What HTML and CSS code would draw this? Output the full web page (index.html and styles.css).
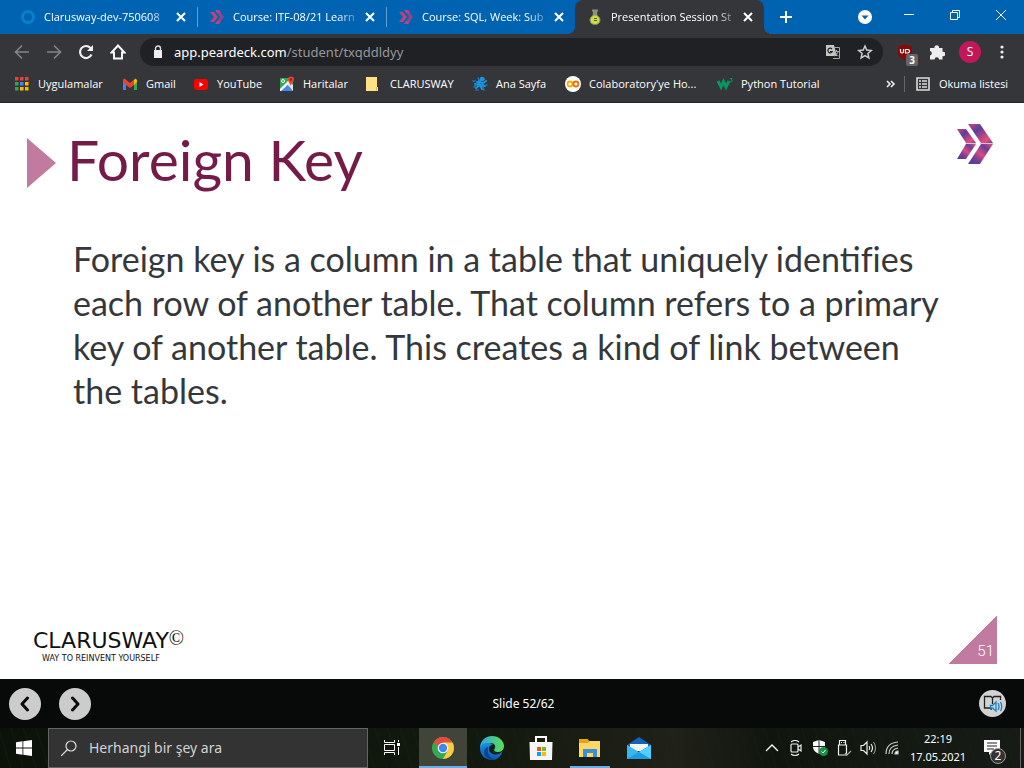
FILE: index.html
```html
<!DOCTYPE html>
<html lang="tr">
<head>
<meta charset="utf-8">
<title>Presentation Session Student</title>
<link rel="stylesheet" href="styles.css">
</head>
<body>
<svg class="defs" aria-hidden="true">
  <defs>
    <linearGradient id="wing" x1="0" y1="0" x2="1" y2="1"><stop offset="0" stop-color="#c9457f"/><stop offset=".35" stop-color="#5b3f98"/><stop offset=".6" stop-color="#b04489"/><stop offset=".8" stop-color="#e84c7c"/><stop offset="1" stop-color="#6a3f95"/></linearGradient>
    <linearGradient id="wing2" x1="0" y1="1" x2="1" y2="0"><stop offset="0" stop-color="#4c3a95"/><stop offset=".3" stop-color="#7a3f95"/><stop offset=".5" stop-color="#d84a85"/><stop offset=".75" stop-color="#673f98"/><stop offset="1" stop-color="#ee4c7d"/></linearGradient>
    <linearGradient id="edgeA" x1="0" y1="0" x2="1" y2="0"><stop offset="0" stop-color="#2aa5e8"/><stop offset="1" stop-color="#5ee04c"/></linearGradient>
    <linearGradient id="edgeB" x1="0" y1="0" x2="0" y2="1"><stop offset="0" stop-color="#1a8fe0"/><stop offset="1" stop-color="#0b58b0"/></linearGradient>
    <symbol id="x" viewBox="0 0 10 10"><path d="M1 1l8 8M9 1l-8 8" fill="none" stroke="#fff" stroke-width="2"/></symbol>
    <symbol id="fav" viewBox="0 0 16 16"><path d="M6 1h4l5 7-5 7H6l5-7z" fill="#8b4592"/><path d="M6 1h4l2 3H8zM8 12h4l-2 3H6z" fill="#b8457f"/><path d="M1 3h4l4 5-4 5H1l4-5z" fill="#b8457f"/></symbol>
  </defs>
</svg>

<header class="browser">
  <div class="tabstrip">
    <div class="tab">
      <svg class="i16" viewBox="0 0 16 16"><circle cx="8" cy="8" r="5.500" fill="none" stroke="#0582c9" stroke-width="3"/></svg>
      <span class="tab-title">Clarusway-dev-750608</span>
      <button class="close" aria-label="Kapat"><svg class="i10"><use href="#x"/></svg></button>
    </div>
    <div class="tab">
      <svg class="i16"><use href="#fav"/></svg>
      <span class="tab-title">Course: ITF-08/21 Learn</span>
      <button class="close" aria-label="Kapat"><svg class="i10"><use href="#x"/></svg></button>
    </div>
    <div class="tab">
      <svg class="i16"><use href="#fav"/></svg>
      <span class="tab-title">Course: SQL, Week: Sub</span>
      <button class="close" aria-label="Kapat"><svg class="i10"><use href="#x"/></svg></button>
    </div>
    <div class="tab active">
      <svg class="i16" viewBox="0 0 16 16"><path d="M6.500 2.500h3l.5 4c2 1.200 3 2.500 3 4.500 0 3-2 4.500-5 4.500S3 14 3 11c0-2 1-3.300 3-4.500z" fill="#cddc4b" stroke="#858b55"/><path d="M5 .5h6v2h-1v4H6v-4H5z" fill="#8c8f85"/><path d="M7 9.500h3M7 11.500h3" stroke="#51601c"/></svg>
      <span class="tab-title">Presentation Session St</span>
      <button class="close" aria-label="Kapat"><svg class="i10"><use href="#x"/></svg></button>
    </div>
    <button class="newtab" aria-label="Yeni sekme"><svg width="12" height="12" viewBox="0 0 12 12"><path d="M6 0v12M0 6h12" stroke="#fff" stroke-width="2"/></svg></button>
    <div class="window-controls">
      <button aria-label="Sekme ara"><svg width="14" height="14" viewBox="0 0 14 14"><circle cx="7" cy="7" r="7" fill="#fff"/><path d="M3.500 5.500h7L7 9.500z" fill="#0063b1"/></svg></button>
      <button aria-label="Küçült"><svg width="12" height="12" viewBox="0 0 12 12"><path d="M1 5.500h10" stroke="#fff"/></svg></button>
      <button aria-label="Geri yükle"><svg width="12" height="12" viewBox="0 0 12 12" fill="none" stroke="#fff"><path d="M1.500 3.500h7v7h-7zM3.500 3V1.500h7v7H9"/></svg></button>
      <button aria-label="Pencereyi kapat"><svg width="12" height="12" viewBox="0 0 12 12"><path d="M1 1l10 10M11 1L1 11" stroke="#fff"/></svg></button>
    </div>
  </div>

  <div class="toolbar">
    <div class="nav">
      <button aria-label="Geri"><svg class="i16" viewBox="0 0 16 16"><path d="M15 8H2M8 1.500L1.500 8 8 14.500" fill="none" stroke="#838487" stroke-width="1.600"/></svg></button>
      <button aria-label="İleri"><svg class="i16" viewBox="0 0 16 16"><path d="M1 8h13M8 1.500L14.500 8 8 14.500" fill="none" stroke="#838487" stroke-width="1.600"/></svg></button>
      <button aria-label="Yenile"><svg class="i16" viewBox="0 0 16 16"><path d="M13.500 10.500a6 6 0 1 1-1-6.500" fill="none" stroke="#f1f1f1" stroke-width="2.200"/><path d="M15 1v6H9z" fill="#f1f1f1"/></svg></button>
      <button aria-label="Ana sayfa"><svg class="i16" viewBox="0 0 16 16"><path d="M8 1.500L1.500 8.500H4v6h8v-6h2.500z" fill="none" stroke="#fff" stroke-width="1.900"/></svg></button>
    </div>
    <div class="omnibox">
      <svg width="10" height="14" viewBox="0 0 10 14"><path d="M1 5h8v8H1z" fill="#eee"/><path d="M2.500 6V3.500a2.500 2.500 0 0 1 5 0V6" fill="none" stroke="#ddd" stroke-width="1.400"/></svg>
      <span class="url">app.peardeck.com<span>/student/txqddldyy</span></span>
      <button aria-label="Çevir"><svg class="i16" viewBox="0 0 16 16"><path d="M1 1h8l3 11H1z" fill="#c6c6c6"/><path d="M9.500 3.500h5v11H8" fill="none" stroke="#a7a7a7"/><path d="M7 5a2.300 2.300 0 1 0 .3 2.500H5" fill="none" stroke="#222" stroke-width="1.200"/><path d="M9 7.500h5M11.500 6v1.500M13 7.500c-.5 2-2 3.500-4 4.500M10 8c1 2 2 3 3.500 4" fill="none" stroke="#a7a7a7"/></svg></button>
      <button aria-label="Yer işareti"><svg class="i16" viewBox="0 0 16 16"><path d="M8 2l1.800 4.100 4.500.4-3.400 3 1 4.400L8 11.600l-3.900 2.300 1-4.400-3.400-3 4.500-.4z" fill="none" stroke="#ccc" stroke-width="1.500"/></svg></button>
    </div>
    <div class="extensions">
      <button class="ublock" aria-label="uBlock"><svg class="i16" viewBox="0 0 16 16"><path d="M8 0c2 1.500 4 2 7 2v6c0 4-3 6.500-7 8-4-1.500-7-4-7-8V2c3 0 5-.500 7-2z" fill="#8b0808"/><path d="M3.500 5v2.500q0 1.500 1.500 1.500t1.500-1.500V5M8.500 9V5.500h2q2 0 2 1.700T10.500 9z" fill="none" stroke="#fff" stroke-width="1.200"/></svg><span class="count">3</span></button>
      <button aria-label="Uzantılar"><svg class="i16" viewBox="0 0 16 16"><path d="M1 4h4.500a2.300 2.300 0 1 1 4.500 0h3.500v4a2.200 2.200 0 1 1 0 4v3.500H10a2.200 2.200 0 0 0-4.400 0H1v-4a2.300 2.300 0 0 0 0-4.500z" fill="#eee"/></svg></button>
      <button class="avatar">S</button>
      <button class="more" aria-label="Menü"><svg width="4" height="16" viewBox="0 0 4 16" fill="#eee"><circle cx="2" cy="3" r="1.600"/><circle cx="2" cy="8" r="1.600"/><circle cx="2" cy="13" r="1.600"/></svg></button>
    </div>
  </div>

  <nav class="bookmarks">
    <a href="#"><svg class="i16" viewBox="0 0 16 16"><path d="M1 1h3.500v3.500H1zM6 1h3.500v3.500H6zM11 1h3.500v3.500H11z" fill="#e94235"/><path d="M1 6h3.500v3.500H1zM1 11h3.500v3.500H1z" fill="#34a354"/><path d="M6 6h3.500v3.500H6z" fill="#4285f4"/><path d="M11 6h3.500v3.500H11zM6 11h3.500v3.500H6zM11 11h3.500v3.500H11z" fill="#fbbc05"/></svg>Uygulamalar</a>
    <a href="#"><svg class="i16" viewBox="0 0 16 16"><path d="M1 4v10h3V7" fill="#4285f4"/><path d="M12 7v7h3V4" fill="#34a853"/><path d="M12 4l1.500-1.500L15 4v2l-3 3z" fill="#fbbc04"/><path d="M1 3.500L2.500 2.500 8 7l4-3.500V9l-4 3-4-3-3-3z" fill="#ea4335"/></svg>Gmail</a>
    <a href="#"><svg class="i16" viewBox="0 0 16 16"><rect x="1" y="3" width="14" height="11" rx="3" fill="#f00"/><path d="M6.500 6v5l4-2.500z" fill="#fff"/></svg>YouTube</a>
    <a href="#"><svg class="i16" viewBox="0 0 16 16"><path d="M1 2h13v13H1z" fill="#34a853"/><path d="M1 15l6.500-7 6.500 7z" fill="#4285f4"/><path d="M1 13L12 2h2v2L2 15H1z" fill="#fff"/><path d="M8 8l6 7V9L10 6z" fill="#e6e6e6"/><circle cx="4" cy="5" r="1.500" fill="none" stroke="#fff"/><path d="M11.500 10C11 7 9 6 9 3.500a3 3 0 0 1 6 0C15 6 12 7 11.500 10z" fill="#ea4335"/><circle cx="12" cy="3.500" r="1.200" fill="#8b1c13"/></svg>Haritalar</a>
    <a href="#"><svg class="i16" viewBox="0 0 16 16"><path d="M0 1h11v10h1v4H0z" fill="#ffe082"/><path d="M10.500 11v3.500" stroke="#d9b64e"/></svg>CLARUSWAY</a>
    <a href="#"><svg class="i16" viewBox="0 0 16 16" fill="none" stroke="#1a95e0" stroke-width="2" stroke-linecap="round"><path d="M7 5l5-2M5 6l6 1 3-2M8 5q-3 3 0 4t3-2M3 8l5 1 5 1M4 12l4-3 2 4" /><circle cx="10" cy="3" r="1.200"/><path d="M1 5h2M2 11l2-2M12 14l-1-3M4 14h2M14 9h1M6 2l1 2" stroke="#1479c0" stroke-width="1.600"/></svg>Ana Sayfa</a>
    <a href="#"><svg class="i16" viewBox="0 0 16 16"><circle cx="8" cy="8" r="8" fill="#fff"/><circle cx="5" cy="8" r="2.500" fill="none" stroke="#f9ab00" stroke-width="1.800"/><circle cx="11" cy="8" r="2.500" fill="none" stroke="#e8710a" stroke-width="1.800"/></svg>Colaboratory'ye Ho...</a>
    <a href="#"><svg class="i16" viewBox="0 0 16 16"><path d="M1 5l3 6 2.500-5.500L9 11l3-6" fill="none" stroke="#059862" stroke-width="3"/><path d="M13 2.500h2l-1 1.500q1.500 0 1 1.500t-2 0" fill="none" stroke="#059862"/></svg>Python Tutorial</a>
    <button class="overflow" aria-label="Diğer yer işaretleri"><svg width="10" height="8" viewBox="0 0 10 8"><path d="M1 1l3 3-3 3M5 1l3 3-3 3" fill="none" stroke="#eee" stroke-width="1.600"/></svg></button>
    <a href="#" class="reading"><svg class="i16" viewBox="0 0 16 16"><path d="M2 2h12v12H2z" fill="none" stroke="#ddd" stroke-width="1.600"/><path d="M4 5h2M7 5h5M4 8h2M7 8h5M4 11h2M7 11h5" stroke="#ddd" stroke-width="1.500"/></svg>Okuma listesi</a>
  </nav>
</header>

<main class="slide">
  <div class="slide-head">
    <svg width="29" height="50" viewBox="0 0 29 50"><path d="M0 0l29 25L0 50z" fill="#c27ba0"/></svg>
    <h1>Foreign Key</h1>
    <svg class="logo" width="38" height="42" viewBox="0 0 38 42"><path d="M1 6h9l10 14H10z" fill="url(#wing)"/><path d="M10 21h10L10 36H1z" fill="url(#wing2)"/><path d="M12 1h12l13 19H25z" fill="url(#wing)"/><path d="M25 21h12L24 41H12z" fill="url(#wing2)"/><path d="M10 20.500h10M24 20.500h13" stroke="#d9c4dc"/></svg>
  </div>
  <p>Foreign key is a column in a table that uniquely identifies<br>each row of another table. That column refers to a primary<br>key of another table. This creates a kind of link between<br>the tables.</p>
  <div class="slide-foot">
    <div class="brand">
      <div class="brand-name">CLARUSWAY<span>©</span></div>
      <div class="brand-tag">WAY TO REINVENT YOURSELF</div>
    </div>
    <div class="page-number">51</div>
  </div>
</main>

<div class="player">
  <div class="player-nav">
    <button class="round" aria-label="Önceki"><svg class="i16" viewBox="0 0 16 16"><path d="M10.500 2L5 8l5.500 6" fill="none" stroke="#080a0a" stroke-width="3" stroke-linecap="round" stroke-linejoin="round"/></svg></button>
    <button class="round" aria-label="Sonraki"><svg class="i16" viewBox="0 0 16 16"><path d="M5.500 2L11 8l-5.500 6" fill="none" stroke="#080a0a" stroke-width="3" stroke-linecap="round" stroke-linejoin="round"/></svg></button>
  </div>
  <div class="player-status">Slide 52/62</div>
  <button class="reader" aria-label="Tam ekran okuyucu"><svg width="20" height="18" viewBox="0 0 20 18" fill="none"><path d="M9 14H8l-1-1H1.500V1.500H8L9.500 3 11 1.500h6.500V5M9.500 3v6" stroke="#222" stroke-width="1.300"/><path d="M7.500 10.500h2L13 7v9l-3.500-3h-2z" stroke="#1782c5" stroke-width="1.300"/><path d="M15 8q2 3.500 0 7M17.500 7q2.500 4.500 0 9" stroke="#1782c5" stroke-width="1.300"/></svg></button>
</div>

<footer class="taskbar">
  <button class="start" aria-label="Başlat"><svg class="i16" viewBox="0 0 16 16" fill="#fff"><path d="M0 2.200l6.500-.9v6.300H0zM7.300 1.200L16 0v7.600H7.300zM0 8.400h6.500v6.300L0 13.800zM7.300 8.400H16V16l-8.700-1.200z"/></svg></button>
  <label class="search">
    <svg class="i16" viewBox="0 0 16 16"><circle cx="10" cy="6" r="5" fill="none" stroke="#ddd" stroke-width="1.200"/><path d="M6.500 9.500L0 16" stroke="#ddd" stroke-width="1.200"/></svg>
    <input type="text" placeholder="Herhangi bir şey ara" aria-label="Herhangi bir şey ara">
  </label>
  <div class="apps">
    <button aria-label="Görev görünümü"><svg width="18" height="18" viewBox="0 0 18 18" fill="none" stroke="#fff"><path d="M1.500 1v2.500h10V1M1.500 16v-2.500h10V16M1.500 5.500h10v6h-10zM15.500 1v2M15.500 8v8"/><path d="M14 4h3v3h-3z" fill="#fff" stroke="none"/></svg></button>
    <button class="current" aria-label="Chrome"><svg class="i24" viewBox="0 0 24 24"><circle cx="12" cy="12" r="11" fill="#34a853"/><path d="M12 12L2.500 6.500A11 11 0 0 1 21.500 6.500H12z" fill="#e84a3c"/><path d="M12 6.500h9.500A11 11 0 0 1 12 23l5-9z" fill="#fbcb43"/><circle cx="12" cy="12" r="5.300" fill="#fff"/><circle cx="12" cy="12" r="4.200" fill="#4285f4"/></svg></button>
    <button aria-label="Edge"><svg class="i24" viewBox="0 0 24 24"><path d="M0 12C0 5 5 0 12 0s12 5 12 10c0 4-3 6-6.500 6-3 0-4-1.500-3-3 2-2.500 0-6-4-6S1 10 0 12z" fill="url(#edgeA)"/><path d="M0 12c1-4 5-5.500 9-5 4 .5 6.500 3.500 5 6-1.500 2-.5 4 3 4 2 0 4-.500 5.500-1.500C21 20.500 17 24 12 24 5 24 0 19 0 12z" fill="url(#edgeB)"/><path d="M8.500 11c-2 5 1 11 6.500 12.500C8 25 4 20 4 16c0-3 2-5 4.500-5z" fill="#0b4592"/><path d="M14.500 10c-1-2-3-2-4.500 0-3 4 1 9 6 8.500 2 0 4-1 5.500-2.500-4 2-9 1.500-8-2z" fill="#10200f"/></svg></button>
    <button aria-label="Microsoft Store"><svg class="i24" viewBox="0 0 24 24"><path d="M7 7V1h10v6" fill="none" stroke="#fff" stroke-width="2"/><path d="M.500 6h23l-.5 18H1z" fill="#f5f5f5"/><path d="M8 11h4v4H8z" fill="#f25022"/><path d="M13 11h4v4h-4z" fill="#7fba00"/><path d="M8 16h4v4H8z" fill="#00a4ef"/><path d="M13 16h4v4h-4z" fill="#ffb900"/></svg></button>
    <button class="open" aria-label="Dosya Gezgini"><svg class="i24" viewBox="0 0 24 24"><path d="M1 3h9l1 2h11v15H1z" fill="#e6a417"/><path d="M1 7h9l2-2h10v16H1z" fill="#ffd766"/><path d="M5 21v-8h14v8h-4v-4H9v4z" fill="#3590d8"/></svg></button>
    <button aria-label="Posta"><svg class="i24" viewBox="0 0 24 24"><path d="M0 9l12-8 12 8v4H0z" fill="#1463b5"/><path d="M3 8h18v7H3z" fill="#f3f3f3"/><path d="M0 9l12 7 12-7v14H0z" fill="#35b8f1"/><path d="M0 23L24 9v14z" fill="#209be3"/><path d="M12 16l12 7V9z" fill="#50d0ff"/></svg></button>
  </div>
  <div class="tray">
    <svg class="i16" viewBox="0 0 16 16"><path d="M2 11l6-6 6 6" fill="none" stroke="#fff" stroke-width="1.300"/></svg>
    <svg class="i16" viewBox="0 0 16 16" fill="none" stroke="#eee" stroke-width="1.200"><rect x="3" y="4" width="7" height="8" rx="1"/><path d="M10 7l3-2v6l-3-2M3 2q4-3 8 0M3 14q4 3 8 0"/></svg>
    <svg class="i16" viewBox="0 0 16 16"><path d="M7 0l6 2v5c0 3-2 5-6 7-4-2-6-4-6-7V2z" fill="#fff"/><path d="M7 0v14M1 6.500h12" stroke="#222"/><circle cx="11.500" cy="11.500" r="4.500" fill="#129344"/><path d="M9.500 11.500l1.500 1.500 2.500-3" fill="none" stroke="#fff"/></svg>
    <svg class="i16" viewBox="0 0 16 16" fill="none" stroke="#eee" stroke-width="1.200"><path d="M3.500 5V.500h6V5M2.500 5h8v10h-8zM5 2.500h1M7.500 2.500h1"/><path d="M9 13l2 2 4-4" stroke="#aaa"/></svg>
    <svg class="i16" viewBox="0 0 16 16" fill="none" stroke="#eee" stroke-width="1.200"><path d="M1 5.500h2.500L7 2v12l-3.500-3.500H1zM9 6q1.500 2 0 4M11 4q3 4 0 8"/><path d="M13.500 2q4 6 0 12" stroke="#888"/></svg>
    <svg class="i16" viewBox="0 0 16 16" fill="none" stroke="#ccc" stroke-width="1.200"><path d="M2 14Q2 3 14 2M5 14q0-8 9-9M8 14q0-5 6-6"/><path d="M11 14q0-3 3-3v3z" fill="#fff"/></svg>
    <div class="clock"><span>22:19</span><span>17.05.2021</span></div>
    <button class="notices" aria-label="Bildirimler"><svg class="i16" viewBox="0 0 16 16"><path d="M0 0h16v12H8l-3 3v-3H0z" fill="#fff"/><path d="M3 3h10M3 6h10M3 9h7" stroke="#222" stroke-width="1.200"/></svg><span class="badge">2</span></button>
  </div>
</footer>
</body>
</html>
```
FILE: styles.css
```css
* { box-sizing: border-box; }
body {
  margin: 0;
  min-height: 100vh;
  display: flex;
  flex-direction: column;
  background: #fff;
  font: 12px/16px "Noto Sans", "Open Sans", sans-serif;
  color: #fff;
}
button { border: 0; padding: 0; margin: 0; background: none; color: inherit; font: inherit; display: flex; align-items: center; justify-content: center; }
a { color: inherit; text-decoration: none; }
svg { flex: none; display: block; }
.defs { position: absolute; width: 0; height: 0; }
.i10 { width: 10px; height: 10px; }
.i16 { width: 16px; height: 16px; }
.i24 { width: 24px; height: 24px; }

.browser { background: #35363a; border-bottom: 1px solid #222326; font: 11px/16px "Open Sans", sans-serif; }
.tabstrip { display: flex; height: 34px; padding-left: 8px; background: #0063b1; }
.tab { flex: 0 1 189px; min-width: 0; display: flex; align-items: center; padding: 0 9px 0 12px; position: relative; }
.tab:nth-child(-n+2)::after { content: ""; position: absolute; right: -1px; top: 7px; width: 1px; height: 20px; background: #65a2d2; }
.tab-title { flex: 1; min-width: 0; overflow: hidden; white-space: nowrap; padding-left: 8px; -webkit-mask-image: linear-gradient(90deg, #000 82%, transparent); mask-image: linear-gradient(90deg, #000 82%, transparent); }
.close { width: 14px; }
.active { background: #35363a; border-radius: 8px 8px 0 0; }
.active::before, .newtab::before { content: ""; position: absolute; bottom: 0; width: 8px; height: 8px; }
.active::before { left: -8px; background: radial-gradient(circle at 0 0, transparent 8px, #35363a 8px); }
.newtab { position: relative; width: 44px; }
.newtab::before { left: 0; background: radial-gradient(circle at 100% 0, transparent 8px, #35363a 8px); }
.window-controls { margin-left: auto; display: flex; padding-bottom: 4px; }
.window-controls button { width: 46px; }
.window-controls button:first-child { width: 42px; padding-top: 4px; }

.toolbar { display: flex; align-items: center; height: 36px; }
.nav { display: flex; gap: 16px; padding: 0 14px; }
.omnibox { flex: 1; display: flex; align-items: center; gap: 16px; height: 28px; padding: 0 10px 0 13px; border-radius: 14px; background: #202124; }
.url { flex: 1; margin-left: -5px; font: 13px/20px "Noto Sans", sans-serif; }
.url span { color: #96989b; }
.extensions { display: flex; align-items: center; gap: 16px; padding: 0 15px 0 14px; }
.ublock { position: relative; }
.count { position: absolute; left: 9px; top: 10px; width: 12px; height: 12px; border-radius: 2px; background: #666; font: bold 10px/12px "Open Sans", sans-serif; }
.avatar { width: 22px; height: 22px; border-radius: 50%; background: #c2185b; margin: 0 -2px; font-size: 12px; }
.more { width: 14px; }

.bookmarks { display: grid; grid-template-columns: 108px 71px 86px 87px 106px 93px 152px 1fr 26px 120px; align-items: center; height: 32px; padding: 0 0 4px 14px; white-space: nowrap; }
.bookmarks a { display: flex; align-items: center; gap: 8px; }
.bookmarks .reading { border-left: 1px solid #65666a; padding-left: 10px; }

.slide { flex: 1; display: flex; flex-direction: column; padding: 20px 27px 15px; background: #fff; color: #35383b; }
.slide-head { display: flex; align-items: center; gap: 11px; height: 80px; }
.slide-head h1 { flex: 1; margin: 0; padding-bottom: 8px; color: #741b47; font: 400 57px/64px Lato, sans-serif; }
.logo { align-self: flex-start; margin-right: 3px; }
.slide p { margin: 34px 0 0 46px; font: 400 34px/44px Lato, sans-serif; white-space: nowrap; }
.slide-foot { margin-top: auto; display: flex; justify-content: space-between; align-items: flex-end; }
.brand { padding-left: 6px; color: #111; font-family: "DejaVu Sans", sans-serif; }
.brand-name { font-size: 22px; line-height: 26px; display: flex; }
.brand-name span { font: 20px/20px "Liberation Serif", serif; }
.brand-tag { padding-left: 9px; font-size: 8px; line-height: 10px; }
.page-number { width: 48px; height: 48px; padding: 25px 3px 0; background: linear-gradient(135deg, transparent 50%, #c27ba0 50%); color: #fff; text-align: right; font: 300 15px/20px Roboto, sans-serif; }

.player { display: grid; grid-template-columns: 1fr auto 1fr; align-items: center; height: 49px; padding: 0 18px 0 9px; background: #080a0a; }
.player-nav { display: flex; gap: 18px; }
.round { width: 32px; height: 32px; border-radius: 50%; background: #ccc; }
.player-status { padding-left: 32px; }
.reader { justify-self: end; width: 27px; height: 27px; border-radius: 50%; background: #d2d2d2; }

.taskbar { display: flex; height: 40px; background: repeating-linear-gradient(73deg, transparent 0 9px, #1a211455 10px, transparent 12px), linear-gradient(90deg, #0b1208, #11180d 45%, #202119 66%, #10160e 75%, #171b16); }
.start { width: 48px; }
.search { flex: 0 1 320px; display: flex; align-items: center; gap: 12px; padding: 0 12px; background: #333; border: 1px solid #656565; }
.search input { flex: 1; min-width: 0; border: 0; padding: 0; background: none; color: #ddd; font: 14px/20px "Noto Sans", sans-serif; }
.search input::placeholder { color: #d2d2d2; opacity: 1; }
.apps { display: flex; gap: 1px; }
.apps button { width: 48px; }
.apps button:first-child { width: 50px; padding-right: 2px; }
.apps .open { background: linear-gradient(#66aeea, #66aeea) center bottom / 40px 2px no-repeat; }
.apps .current { background: #414539; box-shadow: inset 0 -2px #66aeea; }
.tray { margin-left: auto; display: flex; align-items: center; gap: 8px; padding-right: 4px; border-right: 1px solid #666; margin-right: 3px; }
.clock { display: flex; flex-direction: column; align-items: center; width: 60px; line-height: 18px; font-size: 11px; }
.notices { position: relative; width: 40px; height: 36px; padding-right: 8px; }
.badge { position: absolute; right: 10px; bottom: 2px; width: 16px; height: 16px; border: 1px solid #999; border-radius: 50%; background: #333; line-height: 14px; }
```
